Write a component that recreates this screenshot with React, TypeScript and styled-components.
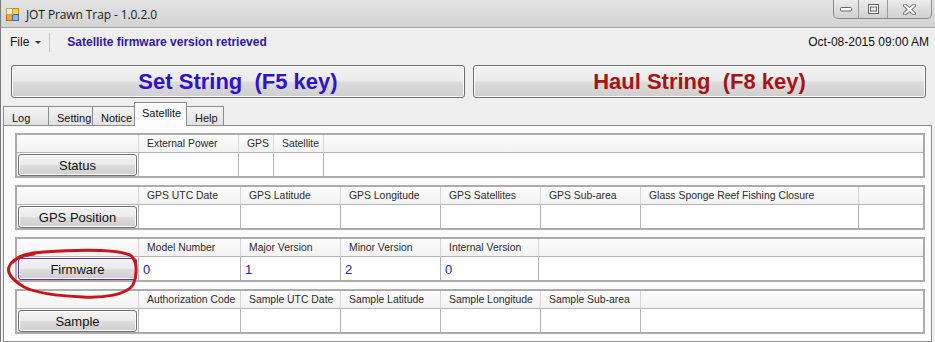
import React from "react";
import styled, { createGlobalStyle, css } from "styled-components";

const Global = createGlobalStyle`
  html, body { margin: 0; padding: 0; background: #f0f0f0; }
  body { font-family: "Liberation Sans", Arial, sans-serif; }
  * { box-sizing: border-box; }
`;

const Window = styled.div`
  width: 935px;
  height: 342px;
  overflow: hidden;
  background: #efefef;
  border-left: 1px solid #7a7a7a;
  display: flex;
  flex-direction: column;
`;

const TitleBar = styled.div`
  height: 28px;
  flex: none;
  display: flex;
  align-items: flex-start;
  background: linear-gradient(#e3e3e3, #d3d3d3);
  border-bottom: 1px solid #a4a4a4;
`;

const TitleLeft = styled.div`
  display: flex;
  align-items: center;
  gap: 6px;
  padding: 6px 0 0 5px;
  flex: 1;
`;

const TitleText = styled.span`
  font-family: "Open Sans", "Noto Sans", sans-serif;
  font-size: 12px;
  color: #1a1a1a;
  letter-spacing: -0.1px;
`;

const Controls = styled.div`
  display: flex;
  margin-right: 3px;
  border: 1px solid #8a8a8a;
  border-top: none;
  border-radius: 0 0 5px 5px;
  overflow: hidden;
  height: 19px;
  background: linear-gradient(#ececec, #d0d0d0);
`;

const CtrlBtn = styled.div<{ $w: number; $last?: boolean }>`
  width: ${(p) => p.$w}px;
  height: 100%;
  display: flex;
  align-items: center;
  justify-content: center;
  ${(p) => !p.$last && css`border-right: 1px solid #9a9a9a;`}
`;

const MenuBar = styled.div`
  height: 28px;
  flex: none;
  display: flex;
  align-items: center;
  padding: 0 5px 0 9px;
  font-size: 12px;
`;

const FileMenu = styled.div`
  display: flex;
  align-items: center;
  gap: 6px;
  color: #111;
  padding-right: 8px;
  height: 19px;
  border-right: 1px solid #c4c4c4;
`;

const Caret = styled.span`
  width: 0;
  height: 0;
  border-left: 3px solid transparent;
  border-right: 3px solid transparent;
  border-top: 3px solid #333;
`;

const StatusText = styled.span`
  margin-left: 17px;
  font-weight: bold;
  color: #3217a6;
  flex: 1;
`;

const DateText = styled.span`
  color: #111;
  margin-right: 1px;
`;

const ActionRow = styled.div`
  display: grid;
  grid-template-columns: 454px 453px;
  gap: 8px;
  padding: 9px 0 0 10px;
  flex: none;
`;

const BigButton = styled.div<{ $color: string }>`
  height: 33px;
  border: 1px solid #707070;
  border-radius: 3px;
  background: linear-gradient(#f3f3f3 0%, #ebebeb 48%, #dcdcdc 52%, #cfcfcf 100%);
  display: flex;
  align-items: center;
  justify-content: center;
  font-weight: bold;
  font-size: 22px;
  color: ${(p) => p.$color};
  white-space: pre;
  box-shadow: inset 0 0 0 1px #fbfbfb;
`;

const TabStrip = styled.div`
  display: flex;
  align-items: flex-end;
  height: 23px;
  margin-top: 4px;
  padding-left: 2px;
  flex: none;
  position: relative;
  z-index: 1;
`;

const Tab = styled.div<{ $w: number; $active?: boolean }>`
  width: ${(p) => p.$w}px;
  font-size: 11px;
  color: #111;
  border: 1px solid #8d8d8d;
  border-bottom: none;
  margin-right: -1px;
  padding-left: 8px;
  display: flex;
  align-items: center;
  ${(p) =>
    p.$active
      ? css`
          height: 24px;
          margin-bottom: -1px;
          background: #fcfcfc;
          padding-left: 7px;
          padding-bottom: 4px;
          position: relative;
          z-index: 2;
        `
      : css`
          height: 19px;
          background: linear-gradient(#f3f3f3, #e2e2e2);
          padding-top: 3px;
        `}
`;

const Panel = styled.div`
  position: relative;
  margin-left: 2px;
  width: 929px;
  flex: 1;
  border: 1px solid #8d8d8d;
  background: #fcfcfc;
  padding: 7px 0 0 11px;
  display: flex;
  flex-direction: column;
  gap: 7px;
`;

const Table = styled.div<{ $cols: string }>`
  width: 910px;
  height: 45px;
  flex: none;
  display: grid;
  grid-template-columns: ${(p) => p.$cols};
  grid-template-rows: 18px 23px;
  border: 2px solid #acacac;
  background: #fff;
`;

const HeadCell = styled.div<{ $last?: boolean }>`
  background: linear-gradient(#fdfdfd, #f2f2f2);
  border-bottom: 1px solid #b4b4b4;
  ${(p) => !p.$last && css`border-right: 1px solid #d6d6d6;`}
  font-size: 10.4px;
  color: #2b2b2b;
  padding: 3px 0 0 8px;
  white-space: nowrap;
  overflow: hidden;
`;

const DataCell = styled.div<{ $last?: boolean }>`
  ${(p) => !p.$last && css`border-right: 1px solid #b4b4b4;`}
  font-size: 13px;
  color: #2020a8;
  padding: 5px 0 0 4px;
  white-space: nowrap;
`;

const ButtonCell = styled.div`
  border-right: 1px solid #b4b4b4;
  padding: 1px 1px 0 1px;
`;

const RowButton = styled.div<{ $focused?: boolean }>`
  height: 22px;
  border: 1px solid ${(p) => (p.$focused ? "#5a2fb0" : "#707070")};
  border-radius: 3px;
  background: linear-gradient(#f3f3f3 0%, #ebebeb 48%, #dcdcdc 52%, #cfcfcf 100%);
  display: flex;
  align-items: center;
  justify-content: center;
  font-size: 13px;
  color: #111;
  box-shadow: inset 0 0 0 1px #fafafa;
`;

const Scribble = styled.svg`
  position: absolute;
  left: 0;
  top: 122px;
  width: 136px;
  height: 52px;
  pointer-events: none;
  overflow: visible;
  z-index: 5;
`;

type Col = { label: string; width: number; value?: string };

const groups: { button: string; cols: Col[]; focused?: boolean }[] = [
  {
    button: "Status",
    cols: [
      { label: "External Power", width: 100 },
      { label: "GPS", width: 35 },
      { label: "Satellite", width: 50 },
    ],
  },
  {
    button: "GPS Position",
    cols: [
      { label: "GPS UTC Date", width: 102 },
      { label: "GPS Latitude", width: 100 },
      { label: "GPS Longitude", width: 100 },
      { label: "GPS Satellites", width: 100 },
      { label: "GPS Sub-area", width: 100 },
      { label: "Glass Sponge Reef Fishing Closure", width: 218 },
    ],
  },
  {
    button: "Firmware",
    focused: true,
    cols: [
      { label: "Model Number", width: 102, value: "0" },
      { label: "Major Version", width: 100, value: "1" },
      { label: "Minor Version", width: 100, value: "2" },
      { label: "Internal Version", width: 98, value: "0" },
    ],
  },
  {
    button: "Sample",
    cols: [
      { label: "Authorization Code", width: 102 },
      { label: "Sample UTC Date", width: 100 },
      { label: "Sample Latitude", width: 100 },
      { label: "Sample Longitude", width: 100 },
      { label: "Sample Sub-area", width: 100 },
    ],
  },
];

const AppIcon = () => (
  <svg width="14" height="14" viewBox="0 0 14 14">
    <rect x="0.5" y="6.5" width="6" height="6" fill="#f2a23a" stroke="#b86b10" />
    <rect x="6.5" y="0.5" width="6" height="6" fill="#f5d24a" stroke="#b89010" />
    <rect x="6.5" y="6.5" width="6" height="6" fill="#8fb8e8" stroke="#3a6aa8" />
    <rect x="0.5" y="0.5" width="6" height="6" fill="#f8f0d0" stroke="#c0a060" />
  </svg>
);

function GroupTable({ g }: { g: (typeof groups)[number] }) {
  const cols = `122px ${g.cols.map((c) => c.width + "px").join(" ")} 1fr`;
  return (
    <Table $cols={cols}>
      <HeadCell />
      {g.cols.map((c) => (
        <HeadCell key={c.label}>{c.label}</HeadCell>
      ))}
      <HeadCell $last />
      <ButtonCell>
        <RowButton $focused={g.focused}>{g.button}</RowButton>
      </ButtonCell>
      {g.cols.map((c) => (
        <DataCell key={c.label}>{c.value ?? ""}</DataCell>
      ))}
      <DataCell $last />
    </Table>
  );
}

export default function App() {
  return (
    <>
      <Global />
      <Window>
        <TitleBar>
          <TitleLeft>
            <AppIcon />
            <TitleText>JOT Prawn Trap - 1.0.2.0</TitleText>
          </TitleLeft>
          <Controls>
            <CtrlBtn $w={25}>
              <svg width="12" height="6" viewBox="0 0 12 6">
                <rect x="0.5" y="1.5" width="11" height="3.5" rx="1" fill="#fff" stroke="#666" />
              </svg>
            </CtrlBtn>
            <CtrlBtn $w={29}>
              <svg width="11" height="10" viewBox="0 0 11 10">
                <rect x="0.5" y="0.5" width="10" height="9" fill="#fff" stroke="#666" />
                <rect x="2.5" y="3" width="6" height="4" fill="#ededed" stroke="#666" />
              </svg>
            </CtrlBtn>
            <CtrlBtn $w={43} $last>
              <svg width="13" height="11" viewBox="0 0 13 11">
                <path d="M2 1.5 L11 9.5 M11 1.5 L2 9.5" stroke="#777" strokeWidth="4" strokeLinecap="round" />
                <path d="M2 1.5 L11 9.5 M11 1.5 L2 9.5" stroke="#fff" strokeWidth="2" strokeLinecap="round" />
              </svg>
            </CtrlBtn>
          </Controls>
        </TitleBar>
        <MenuBar>
          <FileMenu>
            File <Caret />
          </FileMenu>
          <StatusText>Satellite firmware version retrieved</StatusText>
          <DateText>Oct-08-2015 09:00 AM</DateText>
        </MenuBar>
        <ActionRow>
          <BigButton $color="#3311c4">{"Set String  (F5 key)"}</BigButton>
          <BigButton $color="#a81414">{"Haul String  (F8 key)"}</BigButton>
        </ActionRow>
        <TabStrip>
          <Tab $w={46}>Log</Tab>
          <Tab $w={45}>Setting</Tab>
          <Tab $w={43}>Notice</Tab>
          <Tab $w={53} $active>
            Satellite
          </Tab>
          <Tab $w={38}>Help</Tab>
        </TabStrip>
        <Panel>
          {groups.map((g) => (
            <GroupTable key={g.button} g={g} />
          ))}
          <Scribble viewBox="0 0 136 52">
            <path
              d="M9 14 C 15 7, 25 5, 40 4 C 70 2, 110 1, 126 7 C 133 11, 134 26, 129 37 C 122 47, 100 50, 79 49 C 55 48, 32 45, 20 39 C 8 32, 3 25, 5 19 C 7 12, 15 8, 30 6"
              fill="none"
              stroke="#c8141c"
              strokeWidth="3"
              strokeLinecap="round"
              strokeLinejoin="round"
            />
          </Scribble>
        </Panel>
      </Window>
    </>
  );
}
